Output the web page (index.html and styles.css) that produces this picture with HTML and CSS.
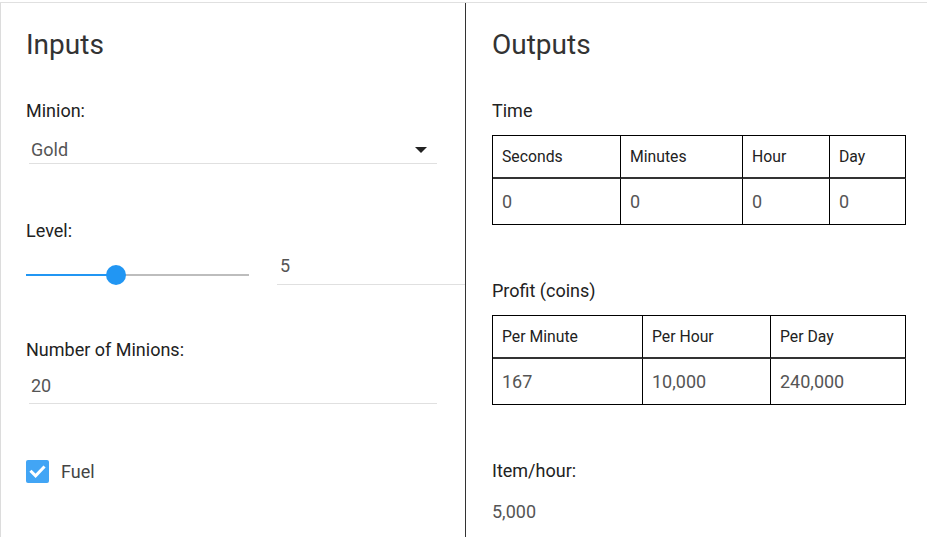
FILE: index.html
```html
<!DOCTYPE html>
<html>
<head>
<meta charset="utf-8">
<link rel="stylesheet" href="styles.css">
</head>
<body>
<div class="page">
  <section class="col col-in">
    <h1 class="title">Inputs</h1>
    <div class="label l-minion">Minion:</div>
    <div class="field select">
      <span class="val">Gold</span>
      <span class="arrow"></span>
    </div>
    <div class="label l-gap">Level:</div>
    <div class="level-row">
      <div class="slider">
        <div class="track-on"></div>
        <div class="track-off"></div>
        <div class="thumb"></div>
      </div>
      <div class="field level-input"><span class="val">5</span></div>
    </div>
    <div class="label l-num">Number of Minions:</div>
    <div class="field num-input"><span class="val">20</span></div>
    <div class="check-row">
      <span class="checkbox">
        <svg width="23" height="23" viewBox="0 0 23 23"><path d="M5.5 11.8 L9.6 15.8 L17.5 7.6" fill="none" stroke="#fff" stroke-width="3" stroke-linecap="square"/></svg>
      </span>
      <span class="check-label">Fuel</span>
    </div>
  </section>
  <section class="col col-out">
    <h1 class="title">Outputs</h1>
    <div class="label l-minion">Time</div>
    <table class="tbl tbl-time">
      <colgroup><col class="t1"><col class="t2"><col class="t3"><col class="t4"></colgroup>
      <thead><tr><th>Seconds</th><th>Minutes</th><th>Hour</th><th>Day</th></tr></thead>
      <tbody><tr><td>0</td><td>0</td><td>0</td><td>0</td></tr></tbody>
    </table>
    <div class="label l-profit">Profit (coins)</div>
    <table class="tbl tbl-profit">
      <colgroup><col class="p1"><col class="p2"><col class="p3"></colgroup>
      <thead><tr><th>Per Minute</th><th>Per Hour</th><th>Per Day</th></tr></thead>
      <tbody><tr><td>167</td><td>10,000</td><td>240,000</td></tr></tbody>
    </table>
    <div class="label l-item">Item/hour:</div>
    <div class="item-val">5,000</div>
  </section>
</div>
</body>
</html>
```
FILE: styles.css
```css
html, body {
  margin: 0;
  padding: 0;
  background: #fff;
}
body {
  font-family: Roboto, "Liberation Sans", Arial, sans-serif;
  color: #222;
  overflow: hidden;
}
.page {
  margin-top: 2px;
  border-top: 1px solid #e0e0e0;
  display: grid;
  grid-template-columns: 465px 1fr;
  height: 534px;
}
.col {
  display: flex;
  flex-direction: column;
  align-items: flex-start;
  min-width: 0;
}
.col-in {
  border-left: 1px solid #dcdcdc;
  padding-left: 25px;
}
.col-out {
  border-left: 1px solid #333;
  padding-left: 26px;
  padding-right: 21px;
}
.title {
  margin: 25px 0 0 0;
  font-size: 28px;
  line-height: 34px;
  font-weight: 400;
  color: #333;
}
.label {
  font-size: 18px;
  line-height: 22px;
  color: #222;
}
.l-minion { margin-top: 38px; }
.l-gap { margin-top: 56px; }
.l-num { margin-top: 54px; }
.l-profit { margin-top: 55px; }
.l-item { margin-top: 55px; }

.field {
  border-bottom: 1px solid #e0e0e0;
  font-size: 18px;
  line-height: 22px;
  color: #555;
  box-sizing: border-box;
}
.select {
  margin: 17px 0 0 3px;
  width: 408px;
  padding: 0 0 2px 2px;
  display: flex;
  align-items: center;
  justify-content: space-between;
}
.arrow {
  width: 0;
  height: 0;
  border-left: 6px solid transparent;
  border-right: 6px solid transparent;
  border-top: 6px solid #222;
  margin-right: 10px;
}
.level-row {
  margin-top: 13px;
  display: flex;
  align-items: flex-end;
  align-self: stretch;
}
.slider {
  position: relative;
  width: 223px;
  height: 21px;
  flex: none;
}
.track-on, .track-off {
  position: absolute;
  top: 10px;
  height: 2px;
}
.track-on {
  left: 0;
  width: 90px;
  background: #2196f3;
}
.track-off {
  left: 90px;
  right: 0;
  background: #bdbdbd;
}
.thumb {
  position: absolute;
  left: 80px;
  top: 1px;
  width: 20px;
  height: 20px;
  border-radius: 50%;
  background: #2196f3;
}
.level-input {
  flex: 1;
  margin-left: 28px;
  padding: 0 0 7px 3px;
}
.num-input {
  margin: 14px 0 0 3px;
  width: 408px;
  padding: 0 0 6px 2px;
}
.check-row {
  margin-top: 56px;
  display: flex;
  align-items: center;
}
.checkbox {
  width: 23px;
  height: 23px;
  border-radius: 2px;
  background: #42a5f5;
  display: block;
}
.checkbox svg { display: block; }
.check-label {
  margin-left: 12px;
  font-size: 18px;
  line-height: 22px;
  color: #444;
}

.tbl {
  margin-top: 13px;
  border-collapse: separate;
  border-spacing: 0;
  table-layout: fixed;
  border-top: 1px solid #000;
  border-left: 1px solid #000;
}
.tbl th, .tbl td {
  border-right: 1px solid #000;
  padding: 0 0 0 9px;
  text-align: left;
  white-space: nowrap;
  overflow: hidden;
}
.tbl th {
  border-bottom: 2px solid #333;
  font-size: 15.75px;
  font-weight: 400;
  line-height: 41px;
  color: #222;
}
.tbl td {
  border-bottom: 1px solid #000;
  font-size: 18px;
  line-height: 45px;
  color: #555;
}
.tbl-time { width: 413px; }
.t1 { width: 128px; }
.t2 { width: 122px; }
.t3 { width: 87px; }
.t4 { width: 76px; }
.tbl-profit { width: 413px; }
.p1 { width: 150px; }
.p2 { width: 128px; }
.p3 { width: 135px; }

.item-val {
  margin-top: 19px;
  font-size: 18px;
  line-height: 22px;
  color: #555;
}
```
